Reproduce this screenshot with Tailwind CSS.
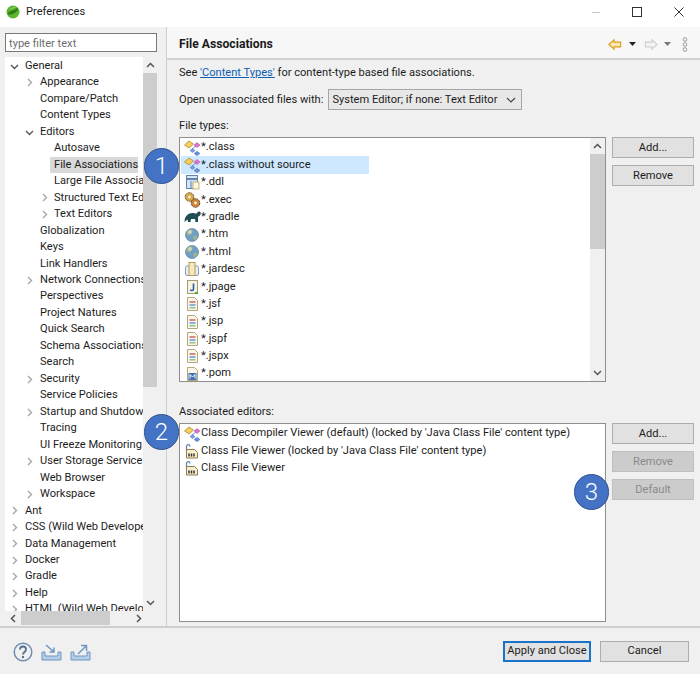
<!DOCTYPE html>
<html><head><meta charset="utf-8">
<script src="https://cdn.jsdelivr.net/npm/@tailwindcss/browser@4"></script>
</head>
<body class="m-0 bg-[#f0f0f0]">
<svg class="hidden" width="0" height="0">
<defs>
<symbol id="right" viewBox="0 0 9 9"><path d="M3 1l3.500 3.500L3 8" fill="none" stroke="#a6a6a6" stroke-width="1.400"/></symbol>
<symbol id="down" viewBox="0 0 9 9"><path d="M1 3l3.500 3.500L8 3" fill="none" stroke="#555" stroke-width="1.400"/></symbol>
<symbol id="cls" viewBox="0 0 17 16"><path d="M.5 5L5 1l4.500 3L5 8z" fill="#f4cf5a" stroke="#a98a2c" stroke-width=".8"/><path d="M8 9l4-3" stroke="#7e8fb8" fill="none"/><path d="M10 5l3-2.500L16 5l-3 2.500z" fill="#e070d4" stroke="#a850a0" stroke-width=".5"/><path d="M6 10.500l2.500-2 2.500 2-2.500 2z" fill="#7a9be0" stroke="#4f6fb0" stroke-width=".5"/><path d="M10 13.500l3-2.200 3 2.200-3 2.200z" fill="#6a8fd8" stroke="#4f6fb0" stroke-width=".5"/></symbol>
<symbol id="ddl" viewBox="0 0 17 16"><rect x="2.500" y="1.500" width="11" height="13" fill="#d6e4f4" stroke="#5f84ad"/><path d="M2.500 5h11" stroke="#5f84ad" stroke-width="2"/><path d="M7 7v7" stroke="#5f84ad"/><rect x="9" y="8" width="6" height="7" fill="#fbf6de" stroke="#b9a467" stroke-width=".8"/></symbol>
<symbol id="exec" viewBox="0 0 17 16"><circle cx="5.500" cy="5" r="4.300" fill="#d5a94e" stroke="#7a5a24" stroke-dasharray="2 .6"/><circle cx="5.500" cy="5" r="1.400" fill="#fff3cc"/><circle cx="11.500" cy="11" r="4.300" fill="#c9843d" stroke="#6e4a1e" stroke-dasharray="2 .6"/><circle cx="11.500" cy="11" r="1.400" fill="#fff3cc"/></symbol>
<symbol id="gradle" viewBox="0 0 17 16"><path d="M.5 13c0-6 4-9 8-9 2 0 3 1 4 .5s1-2 2.500-2 2 1.500 1.500 3-2 1.500-2.500 2.500v5h-2.500l-.5-3h-4l-.5 3H4l-.5-2.500-1.500 1z" fill="#1f4d57"/></symbol>
<symbol id="globe" viewBox="0 0 17 16"><circle cx="8" cy="8" r="6.500" fill="#6f9fc4" stroke="#5d7f99" stroke-width=".7"/><path d="M5 3c2-1 4-.5 4 1s-2 1-2 3-3 1.500-4 .5 0-3.500 2-4.500zM10 9c2-.5 3 0 3 1s-1 3-2.500 3-1.500-3.500-.5-4z" fill="#a3b48a"/><circle cx="6" cy="5" r="2" fill="#fff" opacity=".45"/></symbol>
<symbol id="jar" viewBox="0 0 17 16"><rect x="1.500" y="5" width="13" height="9.500" rx="1.500" fill="#e8eef6" stroke="#8d9fb6"/><rect x="5" y="1.500" width="6" height="13" fill="#f6e9bd" stroke="#b39b5a"/></symbol>
<symbol id="jpage" viewBox="0 0 17 16"><rect x="3.500" y="1.500" width="10" height="13" fill="#f7f3e3" stroke="#a89a6c"/><path d="M9.500 4.500v5.500c0 2-3 2-3 .5" fill="none" stroke="#2b5fa8" stroke-width="1.600"/><path d="M11 14l3 0" stroke="#4aa84a" stroke-width="2"/></symbol>
<symbol id="jsp" viewBox="0 0 17 16"><path d="M3.500 1.500h7l3 3v10h-10z" fill="#faf7ea" stroke="#b5a578"/><rect x="5.500" y="5" width="6" height="2" fill="#d98888"/><rect x="5.500" y="8" width="6" height="2" fill="#8aaedb"/><rect x="5.500" y="11" width="6" height="1.500" fill="#90c090"/></symbol>
<symbol id="pom" viewBox="0 0 17 16"><path d="M3.500 1.500h7l3 3v10h-10z" fill="#faf7ea" stroke="#b5a578"/><rect x="4.500" y="7" width="8" height="7" fill="#3d6fb0"/><path d="M6 12.500V8.500l2.500 2.500L11 8.500v4" stroke="#fff" fill="none"/></symbol>
<symbol id="cfv" viewBox="0 0 17 16"><path d="M2.500 8V3.500c0-2.500 3.500-2.500 3.500 0" fill="none" stroke="#5f7fa8" stroke-width="1.200"/><path d="M2.500 6.500h8l3 3v5.500h-11z" fill="#f7efcf" stroke="#8f7c48"/><path d="M5 10.500v3M7.500 10.500v3M10 10.500v3" stroke="#333" stroke-width="1.500"/></symbol>
</defs>
</svg>

<div class="relative w-[700px] h-[674px] overflow-hidden flex flex-col text-[11.1px] text-[#1c1c1c] bg-[#f0f0f0] whitespace-nowrap" style="font-family:Roboto,'Noto Sans',sans-serif">

<!-- title bar -->
<div class="h-[27px] shrink-0 bg-white flex items-center pl-[6px] pb-[3px]">
  <svg width="14" height="14" viewBox="0 0 14 14"><circle cx="7" cy="7" r="6.500" fill="#5cb531"/><path d="M1.500 9.500C3 5 7 6.500 12 2.500c.5 4-4 7.500-10.500 7z" fill="#2f7d18"/><path d="M3 5c2-2 5-3 7-2.500C7.500 3 5 4 3 5z" fill="#a5e07f"/></svg>
  <span class="ml-[6px] pt-[1px]">Preferences</span>
  <div class="ml-auto flex items-center h-full">
    <svg class="mr-[32px]" width="8" height="11" viewBox="0 0 8 11"><path d="M0 5.500h8" stroke="#c9c9c9"/></svg>
    <svg class="mr-[32px]" width="10" height="10" viewBox="0 0 10 10"><rect x=".5" y=".5" width="9" height="9" fill="none" stroke="#333" stroke-width="1"/></svg>
    <svg class="mr-[16px]" width="10" height="10" viewBox="0 0 10 10"><path d="M.5.500l9 9M9.500.500l-9 9" stroke="#333" stroke-width="1"/></svg>
  </div>
</div>

<!-- main -->
<div class="flex-1 flex min-h-0">
  <!-- left -->
  <div class="w-[166px] shrink-0 pl-[5px] pr-[9px] pt-[6px] flex flex-col">
    <div class="h-[19px] shrink-0 border border-[#7a7a7a] bg-white text-[#6d6d6d] px-[3px] leading-[19px]">type filter text</div>
    <div class="mt-[5px] h-[568px] bg-white flex flex-col overflow-hidden">
      <div class="flex h-[554px]">
        <div class="w-[138px] overflow-hidden pt-[1px]">
          <div class="h-[16.47px] flex items-center pl-[5px]"><svg class="w-[9px] h-[9px] mr-[6px] shrink-0"><use href="#down"/></svg>General</div>
          <div class="h-[16.47px] flex items-center pl-[20px]"><svg class="w-[9px] h-[9px] mr-[6px] shrink-0"><use href="#right"/></svg>Appearance</div>
          <div class="h-[16.47px] flex items-center pl-[35px]">Compare/Patch</div>
          <div class="h-[16.47px] flex items-center pl-[35px]">Content Types</div>
          <div class="h-[16.47px] flex items-center pl-[20px]"><svg class="w-[9px] h-[9px] mr-[6px] shrink-0"><use href="#down"/></svg>Editors</div>
          <div class="h-[16.47px] flex items-center pl-[49px]">Autosave</div>
          <div class="h-[16.47px] flex items-center ml-[45px] pl-[4px] bg-[#d9d9d9] w-[88px]">File Associations</div>
          <div class="h-[16.47px] flex items-center pl-[49px]">Large File Associations</div>
          <div class="h-[16.47px] flex items-center pl-[35px]"><svg class="w-[9px] h-[9px] mr-[5px] shrink-0"><use href="#right"/></svg>Structured Text Editors</div>
          <div class="h-[16.47px] flex items-center pl-[35px]"><svg class="w-[9px] h-[9px] mr-[5px] shrink-0"><use href="#right"/></svg>Text Editors</div>
          <div class="h-[16.47px] flex items-center pl-[35px]">Globalization</div>
          <div class="h-[16.47px] flex items-center pl-[35px]">Keys</div>
          <div class="h-[16.47px] flex items-center pl-[35px]">Link Handlers</div>
          <div class="h-[16.47px] flex items-center pl-[20px]"><svg class="w-[9px] h-[9px] mr-[6px] shrink-0"><use href="#right"/></svg>Network Connections</div>
          <div class="h-[16.47px] flex items-center pl-[35px]">Perspectives</div>
          <div class="h-[16.47px] flex items-center pl-[35px]">Project Natures</div>
          <div class="h-[16.47px] flex items-center pl-[35px]">Quick Search</div>
          <div class="h-[16.47px] flex items-center pl-[35px]">Schema Associations</div>
          <div class="h-[16.47px] flex items-center pl-[35px]">Search</div>
          <div class="h-[16.47px] flex items-center pl-[20px]"><svg class="w-[9px] h-[9px] mr-[6px] shrink-0"><use href="#right"/></svg>Security</div>
          <div class="h-[16.47px] flex items-center pl-[35px]">Service Policies</div>
          <div class="h-[16.47px] flex items-center pl-[20px]"><svg class="w-[9px] h-[9px] mr-[6px] shrink-0"><use href="#right"/></svg>Startup and Shutdown</div>
          <div class="h-[16.47px] flex items-center pl-[35px]">Tracing</div>
          <div class="h-[16.47px] flex items-center pl-[35px]">UI Freeze Monitoring</div>
          <div class="h-[16.47px] flex items-center pl-[20px]"><svg class="w-[9px] h-[9px] mr-[6px] shrink-0"><use href="#right"/></svg>User Storage Service</div>
          <div class="h-[16.47px] flex items-center pl-[35px]">Web Browser</div>
          <div class="h-[16.47px] flex items-center pl-[20px]"><svg class="w-[9px] h-[9px] mr-[6px] shrink-0"><use href="#right"/></svg>Workspace</div>
          <div class="h-[16.47px] flex items-center pl-[5px]"><svg class="w-[9px] h-[9px] mr-[6px] shrink-0"><use href="#right"/></svg>Ant</div>
          <div class="h-[16.47px] flex items-center pl-[5px]"><svg class="w-[9px] h-[9px] mr-[6px] shrink-0"><use href="#right"/></svg>CSS (Wild Web Developer)</div>
          <div class="h-[16.47px] flex items-center pl-[5px]"><svg class="w-[9px] h-[9px] mr-[6px] shrink-0"><use href="#right"/></svg>Data Management</div>
          <div class="h-[16.47px] flex items-center pl-[5px]"><svg class="w-[9px] h-[9px] mr-[6px] shrink-0"><use href="#right"/></svg>Docker</div>
          <div class="h-[16.47px] flex items-center pl-[5px]"><svg class="w-[9px] h-[9px] mr-[6px] shrink-0"><use href="#right"/></svg>Gradle</div>
          <div class="h-[16.47px] flex items-center pl-[5px]"><svg class="w-[9px] h-[9px] mr-[6px] shrink-0"><use href="#right"/></svg>Help</div>
          <div class="h-[16.47px] flex items-center pl-[5px]"><svg class="w-[9px] h-[9px] mr-[6px] shrink-0"><use href="#right"/></svg>HTML (Wild Web Developer)</div>
        </div>
        <!-- vertical scrollbar -->
        <div class="w-[14px] shrink-0 bg-[#f0f0f0] flex flex-col items-center">
          <div class="h-[16px] flex items-center"><svg width="9" height="6" viewBox="0 0 9 6"><path d="M1 5l3.500-3.500L8 5" fill="none" stroke="#555" stroke-width="1.500"/></svg></div>
          <div class="w-full h-[314px] bg-[#cdcdcd]"></div>
          <div class="mt-auto h-[16px] flex items-center"><svg width="9" height="6" viewBox="0 0 9 6"><path d="M1 1l3.500 3.500L8 1" fill="none" stroke="#555" stroke-width="1.500"/></svg></div>
        </div>
      </div>
      <!-- horizontal scrollbar -->
      <div class="h-[14px] shrink-0 flex items-center bg-[#f0f0f0]">
        <div class="w-[16px] flex justify-center"><svg width="6" height="9" viewBox="0 0 6 9"><path d="M5 1L1.500 4.500 5 8" fill="none" stroke="#555" stroke-width="1.500"/></svg></div>
        <div class="w-[89px] h-full bg-[#cdcdcd]"></div>
        <div class="ml-[22px] w-[14px] flex justify-center"><svg width="6" height="9" viewBox="0 0 6 9"><path d="M1 1l3.500 3.500L1 8" fill="none" stroke="#555" stroke-width="1.500"/></svg></div>
      </div>
    </div>
  </div>
  <div class="w-[1px] bg-[#cfcfcf] shrink-0"></div>

  <!-- right -->
  <div class="flex-1 flex flex-col min-w-0">
    <div class="h-[33px] shrink-0 bg-[#f7f7f7] border-b-2 border-[#d2d2d2] flex items-center pt-[3px] pl-[12px] pr-[12px]">
      <span class="font-bold text-[12.2px]">File Associations</span>
      <div class="ml-auto flex items-center">
        <svg width="14" height="13" viewBox="0 0 15 13"><path d="M1 6.500L6.500 1.500v2.500h7v5h-7v2.500z" fill="#fbe6ae" stroke="#d9a021" stroke-width="1.200"/></svg>
        <svg class="ml-[7px]" width="7" height="4" viewBox="0 0 7 4"><path d="M0 0h7L3.500 4z" fill="#222"/></svg>
        <svg class="ml-[8px]" width="14" height="13" viewBox="0 0 15 13"><path d="M14 6.500L8.500 1.500v2.500h-7v5h7v2.500z" fill="#f4f4f4" stroke="#cfcfcf" stroke-width="1.200"/></svg>
        <svg class="ml-[6px]" width="7" height="4" viewBox="0 0 7 4"><path d="M0 0h7L3.500 4z" fill="#777"/></svg>
        <svg class="ml-[11px]" width="6" height="15" viewBox="0 0 6 15"><circle cx="3" cy="2.500" r="1.800" fill="none" stroke="#9a9a9a"/><circle cx="3" cy="7.500" r="1.800" fill="none" stroke="#9a9a9a"/><circle cx="3" cy="12.500" r="1.800" fill="none" stroke="#9a9a9a"/></svg>
      </div>
    </div>
    <div class="flex-1 pl-[12px] pr-[6px] flex flex-col min-h-0">
      <div class="h-[16px] mt-[5px] leading-[16px]">See <span class="text-[#0b5fb5] underline">'Content Types'</span> for content-type based file associations.</div>
      <div class="flex items-center mt-[8px] h-[21px]">
        <span class="pt-[1px]">Open unassociated files with:</span>
        <div class="ml-[5px] w-[194px] h-[21px] border border-[#a6a6a6] bg-[#e8e8e8] flex items-center pl-[3px] pr-[5px] pt-[1px]">
          <span>System Editor; if none: Text Editor</span>
          <svg class="ml-auto" width="10" height="6" viewBox="0 0 10 6"><path d="M1 1l4 4 4-4" fill="none" stroke="#444" stroke-width="1.200"/></svg>
        </div>
      </div>
      <div class="mt-[8px] h-[16px] leading-[16px]">File types:</div>
      <div class="mt-[3px] flex gap-[6px] h-[245px] shrink-0">
        <div class="w-[427px] h-full border border-[#8f8f8f] bg-white flex overflow-hidden">
          <div class="flex-1 pt-[1px] pl-[1px]">
            <div class="h-[17.4px] flex items-center pl-[3px]"><svg class="w-[17px] h-[16px] shrink-0"><use href="#cls"/></svg>*.class</div>
            <div class="h-[17.4px] w-[188px] flex items-center pl-[3px] bg-[#cde8ff]"><svg class="w-[17px] h-[16px] shrink-0"><use href="#cls"/></svg>*.class without source</div>
            <div class="h-[17.4px] flex items-center pl-[3px]"><svg class="w-[17px] h-[16px] shrink-0"><use href="#ddl"/></svg>*.ddl</div>
            <div class="h-[17.4px] flex items-center pl-[3px]"><svg class="w-[17px] h-[16px] shrink-0"><use href="#exec"/></svg>*.exec</div>
            <div class="h-[17.4px] flex items-center pl-[3px]"><svg class="w-[17px] h-[16px] shrink-0"><use href="#gradle"/></svg>*.gradle</div>
            <div class="h-[17.4px] flex items-center pl-[3px]"><svg class="w-[17px] h-[16px] shrink-0"><use href="#globe"/></svg>*.htm</div>
            <div class="h-[17.4px] flex items-center pl-[3px]"><svg class="w-[17px] h-[16px] shrink-0"><use href="#globe"/></svg>*.html</div>
            <div class="h-[17.4px] flex items-center pl-[3px]"><svg class="w-[17px] h-[16px] shrink-0"><use href="#jar"/></svg>*.jardesc</div>
            <div class="h-[17.4px] flex items-center pl-[3px]"><svg class="w-[17px] h-[16px] shrink-0"><use href="#jpage"/></svg>*.jpage</div>
            <div class="h-[17.4px] flex items-center pl-[3px]"><svg class="w-[17px] h-[16px] shrink-0"><use href="#jsp"/></svg>*.jsf</div>
            <div class="h-[17.4px] flex items-center pl-[3px]"><svg class="w-[17px] h-[16px] shrink-0"><use href="#jsp"/></svg>*.jsp</div>
            <div class="h-[17.4px] flex items-center pl-[3px]"><svg class="w-[17px] h-[16px] shrink-0"><use href="#jsp"/></svg>*.jspf</div>
            <div class="h-[17.4px] flex items-center pl-[3px]"><svg class="w-[17px] h-[16px] shrink-0"><use href="#jsp"/></svg>*.jspx</div>
            <div class="h-[17.4px] flex items-center pl-[3px]"><svg class="w-[17px] h-[16px] shrink-0"><use href="#pom"/></svg>*.pom</div>
          </div>
          <div class="w-[15px] shrink-0 bg-[#f0f0f0] flex flex-col items-center">
            <div class="h-[16px] flex items-center"><svg width="9" height="6" viewBox="0 0 9 6"><path d="M1 5l3.500-3.500L8 5" fill="none" stroke="#555" stroke-width="1.500"/></svg></div>
            <div class="w-full h-[95px] bg-[#cdcdcd]"></div>
            <div class="mt-auto h-[16px] flex items-center"><svg width="9" height="6" viewBox="0 0 9 6"><path d="M1 1l3.500 3.500L8 1" fill="none" stroke="#555" stroke-width="1.500"/></svg></div>
          </div>
        </div>
        <div class="w-[82px] flex flex-col gap-[7px]">
          <div class="h-[21px] border border-[#adadad] bg-[#e1e1e1] flex items-center justify-center pt-[1px]">Add...</div>
          <div class="h-[21px] border border-[#adadad] bg-[#e1e1e1] flex items-center justify-center pt-[1px]">Remove</div>
        </div>
      </div>
      <div class="mt-[22px] h-[16px] leading-[16px]">Associated editors:</div>
      <div class="mt-[3px] flex gap-[6px] h-[199px] shrink-0">
        <div class="w-[427px] h-full border border-[#8f8f8f] bg-white pl-[1px] pt-[1px]">
          <div class="h-[17.4px] flex items-center pl-[3px]"><svg class="w-[17px] h-[16px] shrink-0"><use href="#cls"/></svg>Class Decompiler Viewer (default) (locked by 'Java Class File' content type)</div>
          <div class="h-[17.4px] flex items-center pl-[3px]"><svg class="w-[17px] h-[16px] shrink-0"><use href="#cfv"/></svg>Class File Viewer (locked by 'Java Class File' content type)</div>
          <div class="h-[17.4px] flex items-center pl-[3px]"><svg class="w-[17px] h-[16px] shrink-0"><use href="#cfv"/></svg>Class File Viewer</div>
        </div>
        <div class="w-[82px] flex flex-col gap-[7px]">
          <div class="h-[21px] border border-[#adadad] bg-[#e1e1e1] flex items-center justify-center pt-[1px]">Add...</div>
          <div class="h-[21px] border border-[#bfbfbf] bg-[#cccccc] text-[#8a8a8a] flex items-center justify-center pt-[1px]">Remove</div>
          <div class="h-[21px] border border-[#bfbfbf] bg-[#cccccc] text-[#8a8a8a] flex items-center justify-center pt-[1px]">Default</div>
        </div>
      </div>
    </div>
  </div>
</div>

<!-- footer -->
<div class="h-[48px] shrink-0 border-t-2 border-[#cfcfcf] flex items-center pl-[13px] pr-[11px] pt-[1px]">
  <svg width="20" height="20" viewBox="0 0 20 20"><circle cx="10" cy="10" r="8.800" fill="none" stroke="#6f8fb0" stroke-width="1.500"/><path d="M7 7.500c0-4 6-4 6 0 0 2.500-3 2.500-3 5" fill="none" stroke="#51718f" stroke-width="1.800"/><circle cx="10" cy="15" r="1.200" fill="#51718f"/></svg>
  <svg class="ml-[8px]" width="21" height="18" viewBox="0 0 21 18"><path d="M1 9v8h19V9h-3v4H4V9z" fill="#b5cde6" stroke="#6f97c2"/><path d="M5 2l8 7M13 4.500V9H8.500" fill="none" stroke="#6f97c2" stroke-width="1.500"/></svg>
  <svg class="ml-[8px]" width="21" height="18" viewBox="0 0 21 18"><path d="M1 9v8h19V9h-3v4H4V9z" fill="#b5cde6" stroke="#6f97c2"/><path d="M8 11l8-8M11 2.500h5.500V8" fill="none" stroke="#6f97c2" stroke-width="1.500"/></svg>
  <div class="ml-auto flex gap-[9px]">
    <div class="w-[88px] h-[21px] border-2 border-[#1a73c9] bg-[#e1e1e1] flex items-center justify-center">Apply and Close</div>
    <div class="w-[89px] h-[21px] border border-[#adadad] bg-[#e1e1e1] flex items-center justify-center">Cancel</div>
  </div>
</div>

<!-- callout badges -->
<div class="absolute left-[144px] top-[148px] w-[35px] h-[36px] rounded-full bg-[#4472c4] border border-[#2f528f] text-white text-[24px] font-light flex items-center justify-center">1</div>
<div class="absolute left-[144px] top-[414px] w-[35px] h-[36px] rounded-full bg-[#4472c4] border border-[#2f528f] text-white text-[24px] font-light flex items-center justify-center">2</div>
<div class="absolute left-[574px] top-[474px] w-[35px] h-[36px] rounded-full bg-[#4472c4] border border-[#2f528f] text-white text-[24px] font-light flex items-center justify-center">3</div>
</div>
</body></html>
